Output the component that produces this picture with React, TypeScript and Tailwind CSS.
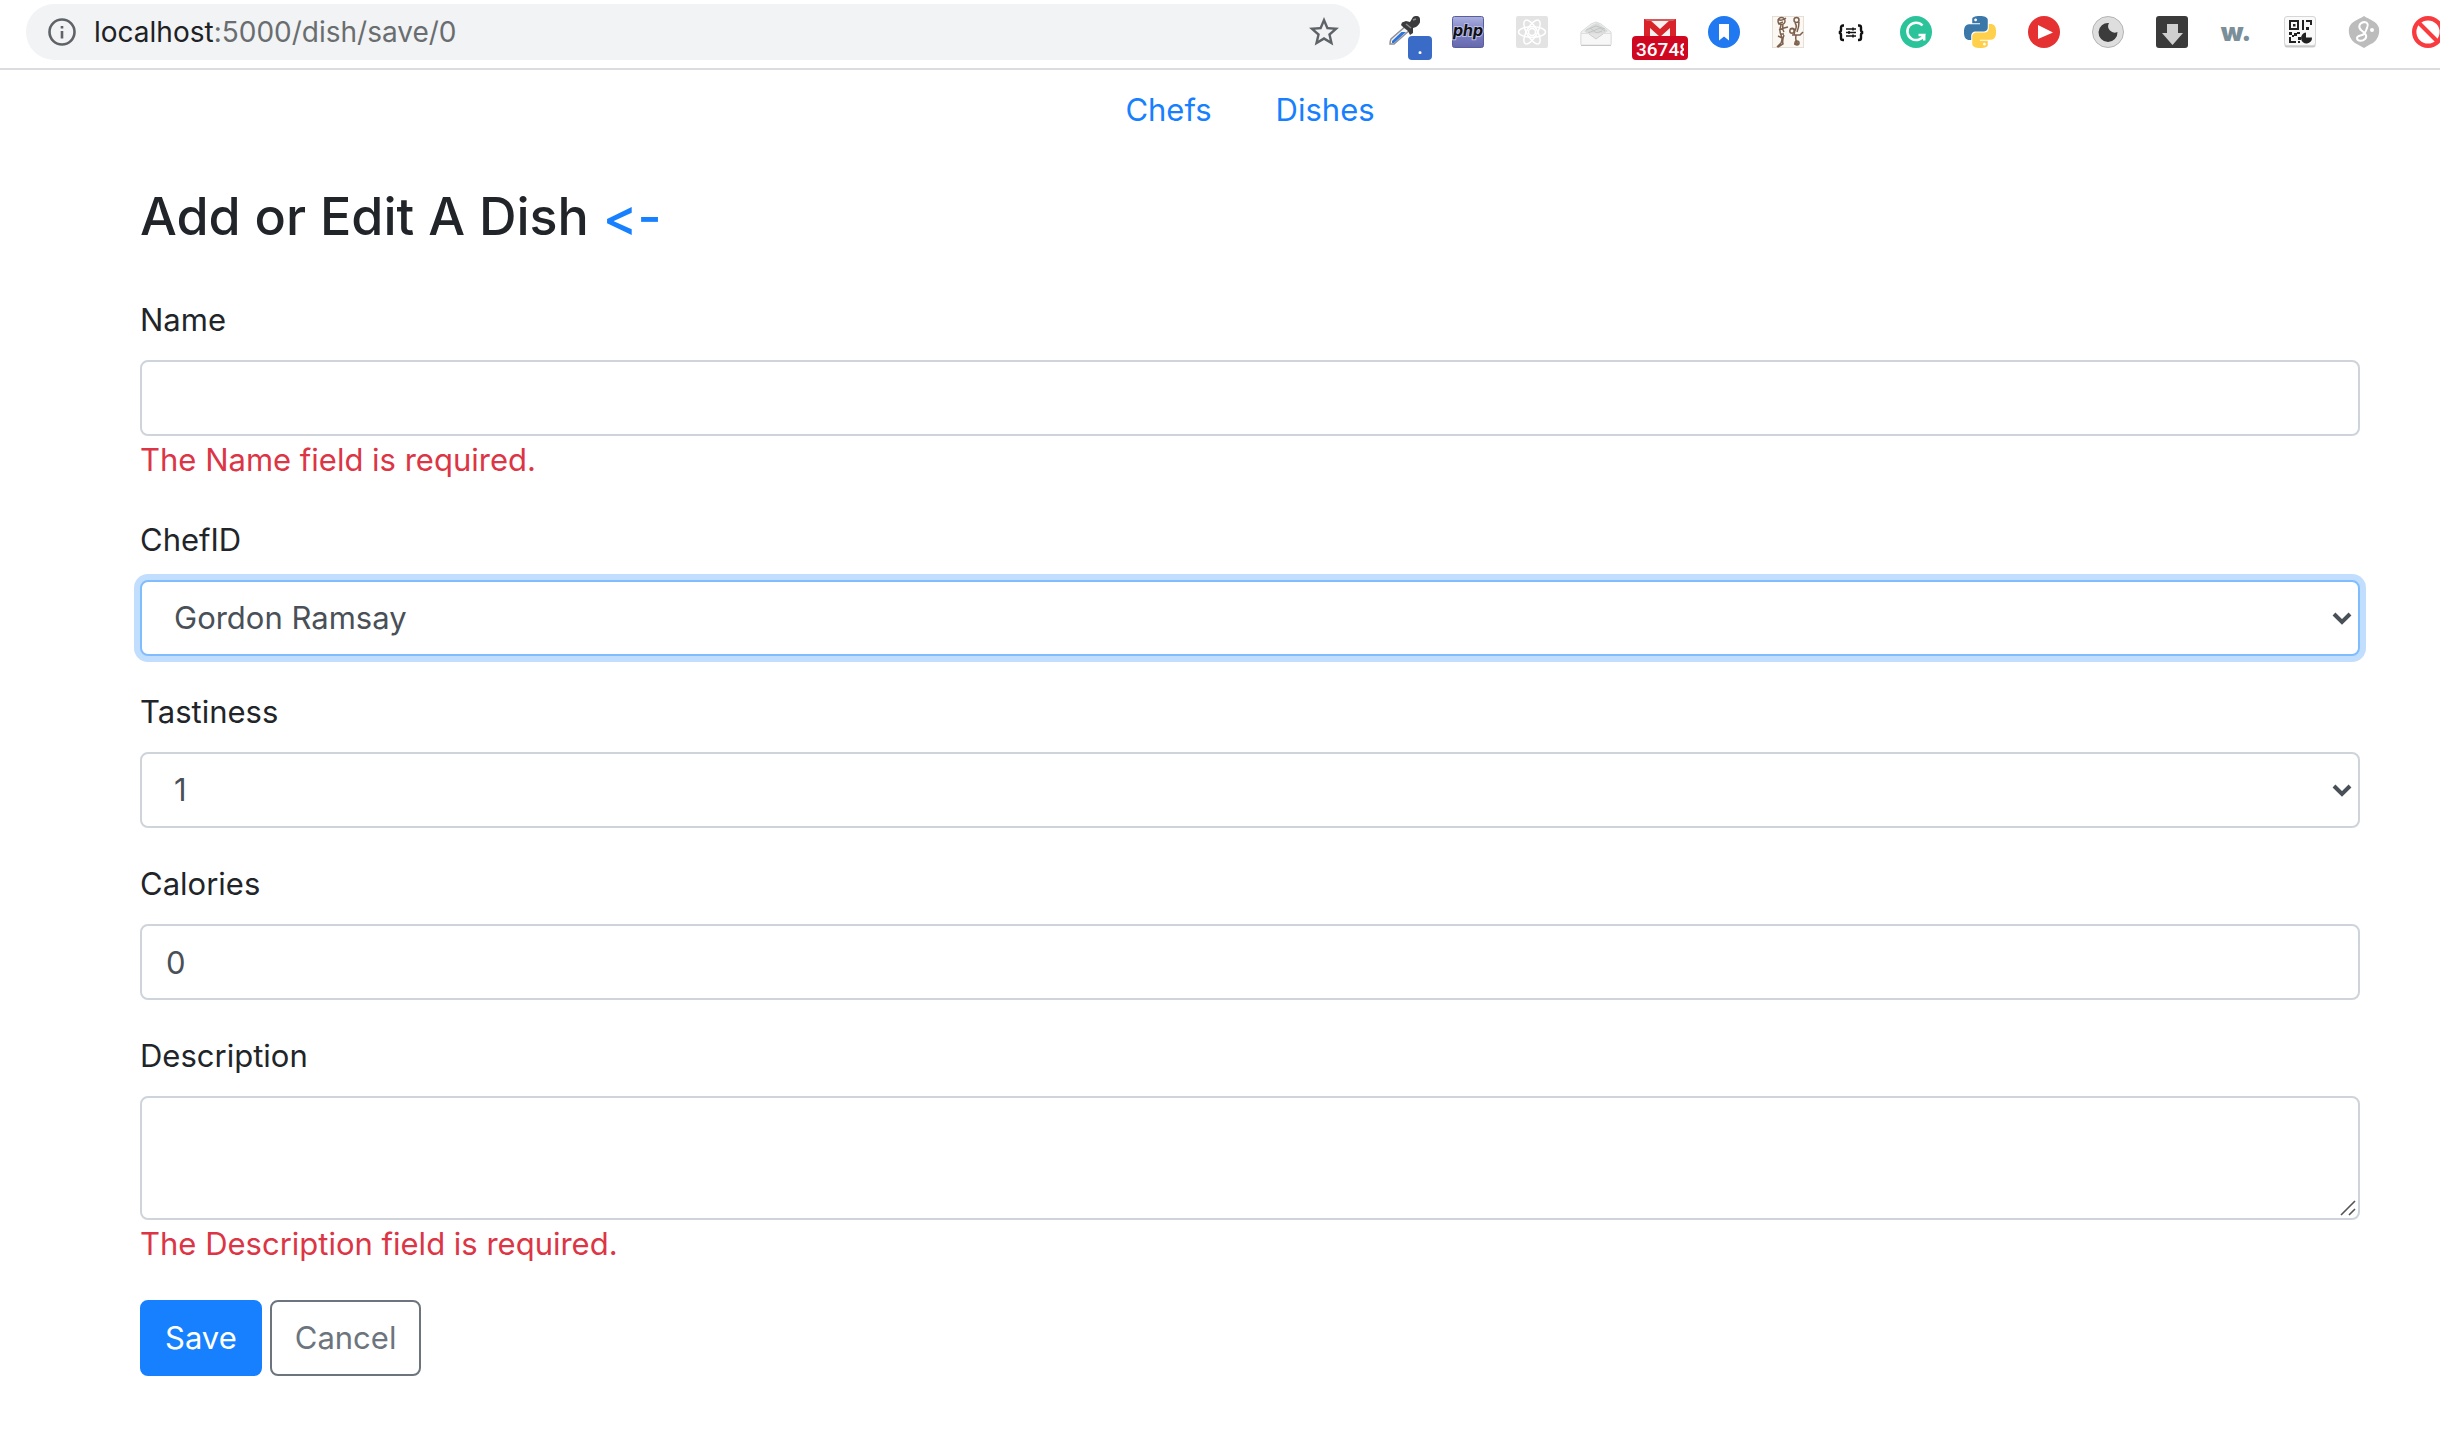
import { useState } from "react";
import type { ReactNode } from "react";

function Ext({ label, children }: { label: string; children: ReactNode }) {
  return (
    <button type="button" aria-label={label} className="relative h-8 w-8 shrink-0">
      {children}
    </button>
  );
}

function Svg({ children, box = "0 0 32 32" }: { children: ReactNode; box?: string }) {
  return (
    <svg viewBox={box} className="block h-8 w-8" aria-hidden="true">
      {children}
    </svg>
  );
}

function Extensions() {
  return (
    <div className="flex shrink-0 gap-8">
      <Ext label="Color picker">
        <Svg>
          <path d="M19 9 3 23c-1 2-1 3-1 5h4L23 13z" fill="#f4f5f7" stroke="#8d9096" strokeWidth="1.5" />
          <path d="M13.5 16 4 25v2h2L18 16z" fill="#2f74d8" />
          <path d="M14 6.5 18 5l4 1 3-5c3-2 7-1 7 2 1 3-1 6-4 8l-3 1v5l-3 2-2-4-5-4-2-2z" fill="#3b3b3d" />
          <path d="m25 4 3-1M18 8l5 4" stroke="#8b8b8b" strokeWidth="1.5" />
        </Svg>
        <span className="absolute top-5 left-5 flex h-6 w-6 items-center justify-center rounded-sm bg-[#3a6bc7] text-base leading-6 font-bold text-white">
          .
        </span>
      </Ext>
      <Ext label="PHP">
        <Svg>
          <defs>
            <linearGradient id="php" x1="0" y1="0" x2="0" y2="1">
              <stop offset="0" stopColor="#aab0e0" />
              <stop offset=".45" stopColor="#8085c4" />
              <stop offset="1" stopColor="#6568ae" />
            </linearGradient>
          </defs>
          <rect x=".5" y=".5" width="31" height="31" rx="2" fill="url(#php)" stroke="#5b5e99" />
          <text
            x="16"
            y="20"
            textAnchor="middle"
            fontFamily="Inter, sans-serif"
            fontSize="16"
            fontWeight="700"
            fontStyle="italic"
            fill="#111"
            stroke="#b9bde8"
            strokeWidth="2"
            paintOrder="stroke"
          >
            php
          </text>
        </Svg>
      </Ext>
      <Ext label="React tools">
        <Svg>
          <rect width="32" height="32" rx="2" fill="#e3e3e3" />
          <g fill="none" stroke="#fff" strokeWidth="1.5">
            <ellipse cx="16" cy="16" rx="13.5" ry="5.2" />
            <ellipse cx="16" cy="16" rx="13.5" ry="5.2" transform="rotate(60 16 16)" />
            <ellipse cx="16" cy="16" rx="13.5" ry="5.2" transform="rotate(120 16 16)" />
            <circle cx="16" cy="16" r="3.5" />
          </g>
        </Svg>
      </Ext>
      <Ext label="Mail checker">
        <Svg>
          <path d="M1 16 11 8l5-2 5 2 10 8v12H1z" fill="#f1f1f1" stroke="#dadada" />
          <path d="m4 15 8-6 5-2 5 3 6 5-6 4H9z" fill="#d9dada" />
          <path d="m6 14 10-4 9 3M8 17l12-5 5 3M11 19l11-4M10 12l9 7" stroke="#c3c5c5" fill="none" />
          <path d="M1 17.5h30V29H1z" fill="#f7f7f7" stroke="#dfdfdf" />
          <path d="m9 18 7 5 7-5" fill="#e4e4e4" stroke="#cfcfcf" />
          <path d="M1 29.5h30" stroke="#c6c6c6" />
        </Svg>
      </Ext>
      <Ext label="Gmail">
        <Svg>
          <path d="M0 3h32v24H0z" fill="#f5f1f1" />
          <path d="M0 3h5l11 10L27 3h5v24h-6V12l-10 9L6 12v15H0z" fill="#d9232a" />
          <path d="M0 3h32l-3 2H3z" fill="#d65a5a" />
        </Svg>
        <span className="absolute top-5 -left-3 h-6 w-14 rounded-sm bg-[#d00721] px-1">
          <span className="block overflow-hidden text-left font-[Roboto,sans-serif] text-[19px] leading-7 font-medium text-white">
            36748
          </span>
        </span>
      </Ext>
      <Ext label="Bookmarks">
        <Svg>
          <circle cx="16" cy="16" r="16" fill="#2079f0" />
          <path d="M11 8h10v16.500l-5-4-5 4z" fill="#fff" />
        </Svg>
      </Ext>
      <Ext label="Sketch figures">
        <Svg>
          <rect x=".5" y=".5" width="31" height="31" fill="#fbf8f4" stroke="#e6dfd7" />
          <g fill="none" stroke="#7d604d" strokeWidth="1.5">
            <circle cx="9.500" cy="5" r="3.500" />
            <path d="M6 3q3 3 8-1M6 8l5-2M9 9q-2 6 0 10M11 9q-1 4 1 7M7 14l5-2 4-1M8 18h4M9 19q2 4 0 8l-4 4M12 19q-2 5-1 9l-5 3M6 20l4 2" />
            <circle cx="24.500" cy="4" r="2.500" />
            <path d="M23 7q3 4-1 9M27 6q0 5-2 10M18 13q3-2 5 1l-1 5M20 19h8l3-3M24 19q-1 6 2 9M22 28h4" />
            <circle cx="20" cy="15" r="2.200" />
            <circle cx="25" cy="27" r="2" />
          </g>
        </Svg>
      </Ext>
      <Ext label="JSON viewer">
        <Svg>
          <g fill="none" stroke="#111" strokeWidth="2.400">
            <path d="M8 9.500H7q-2 0-2 2v2.500q0 2-2 2.500Q5 17 5 19v3q0 2 2 2h1M22 9.500h1q2 0 2 2v2.500q0 2 2 2.500-2 .5-2 2.500v3q0 2-2 2h-1" />
          </g>
          <path d="M10 13h10M10 16.500h10M10 20h10M17 11.500v3M13 15v3M17 18.500v3" stroke="#111" strokeWidth="1.500" />
        </Svg>
      </Ext>
      <Ext label="Grammar checker">
        <Svg>
          <circle cx="16" cy="16" r="16" fill="#2bc39a" />
          <path d="M22.500 9.500A8.700 8.700 0 1 0 24 19h-5.500M24.200 24.500V19" fill="none" stroke="#fff" strokeWidth="2.500" />
        </Svg>
      </Ext>
      <Ext label="Python">
        <Svg box="0 0 24 24">
          <path
            fill="#3b77a8"
            d="M14.25.18l.9.2.73.26.59.3.45.32.34.34.25.34.16.33.1.3.04.26.02.2-.01.13V8.5l-.05.63-.13.55-.21.46-.26.38-.3.31-.33.25-.35.19-.35.14-.33.1-.3.07-.26.04-.21.02H8.77l-.69.05-.59.14-.5.22-.41.27-.33.32-.27.35-.2.36-.15.37-.1.35-.07.32-.04.27-.02.21v3.06H3.17l-.21-.03-.28-.07-.32-.12-.35-.18-.36-.26-.36-.36-.35-.46-.32-.59-.28-.73-.21-.88-.14-1.05-.05-1.23.06-1.22.16-1.04.24-.87.32-.71.36-.57.4-.44.42-.33.42-.24.4-.16.36-.1.32-.05.24-.01h.16l.06.01h8.16v-.83H6.18l-.01-2.75-.02-.37.05-.34.11-.31.17-.28.25-.26.31-.23.38-.2.44-.18.51-.15.58-.12.64-.1.71-.06.77-.04.84-.02 1.27.05zm-6.3 1.98l-.23.33-.08.41.08.41.23.34.33.22.41.09.41-.09.33-.22.23-.34.08-.41-.08-.41-.23-.33-.33-.22-.41-.09-.41.09z"
          />
          <path
            fill="#ffd04c"
            d="M21.04 6.11l.28.06.32.12.35.18.36.27.36.35.35.47.32.59.28.73.21.88.14 1.04.05 1.23-.06 1.23-.16 1.04-.24.86-.32.71-.36.57-.4.45-.42.33-.42.24-.4.16-.36.09-.32.05-.24.02-.16-.01h-8.22v.82h5.84l.01 2.76.02.36-.05.34-.11.31-.17.29-.25.25-.31.24-.38.2-.44.17-.51.15-.58.13-.64.09-.71.07-.77.04-.84.01-1.27-.04-1.07-.14-.9-.2-.73-.25-.59-.3-.45-.33-.34-.34-.25-.34-.16-.33-.1-.3-.04-.25-.02-.2.01-.13v-5.34l.05-.64.13-.54.21-.46.26-.38.3-.32.33-.24.35-.2.35-.14.33-.1.3-.06.26-.04.21-.02.13-.01h5.84l.69-.05.59-.14.5-.21.41-.28.33-.32.27-.35.2-.36.15-.36.1-.35.07-.32.04-.28.02-.21V6.07h2.09l.14.01zm-6.47 14.25l-.23.33-.08.41.08.41.23.33.33.23.41.08.41-.08.33-.23.23-.33.08-.41-.08-.41-.23-.33-.33-.23-.41-.08-.41.08z"
          />
        </Svg>
      </Ext>
      <Ext label="Video player">
        <Svg>
          <circle cx="16" cy="16" r="16" fill="#e53131" />
          <path d="m10 9 15 7.500L10 23z" fill="#fff" />
        </Svg>
      </Ext>
      <Ext label="Dark mode">
        <Svg>
          <circle cx="16" cy="16" r="15.500" fill="#dedede" stroke="#b4b4b4" />
          <path d="M17 7a6.500 6.500 0 0 0 8.500 9A9.500 9.500 0 1 1 17 7z" fill="#3c3c3c" />
        </Svg>
      </Ext>
      <Ext label="Downloader">
        <Svg>
          <rect width="32" height="32" rx="3" fill="#3a3a3a" />
          <path d="M11 8h11v9h5L16.500 29 6 17h5z" fill="#cfcfcf" />
        </Svg>
      </Ext>
      <Ext label="Word tool">
        <span className="block text-center text-[26px] leading-7 font-black text-[#7a8f99]">w.</span>
      </Ext>
      <Ext label="QR code">
        <Svg>
          <rect x=".5" y="1" width="31" height="30.500" rx="2.500" fill="#c9c9c9" />
          <rect x=".5" y=".5" width="31" height="29" rx="2.500" fill="#fafafa" stroke="#d6d6d6" />
          <path d="M6 5h8v8H6z" fill="none" stroke="#222" strokeWidth="2" />
          <path d="M9 8h2.500v2.500H9zM18 4h2v10h-2zM22 4h6v5h-2V6h-4zM22 11h3v3h-3zM5 16h3v3H5zM10 17h3v3h-3zM13 16h3v2h-3zM8 19h2v2H8zM5 21h2v4h5v2H5zM14 21h3v3h-3zM14 25h2v2h-2z" fill="#222" />
          <path d="M22 16.500v5h6a5.500 5.500 0 1 1-6-5z" fill="#222" />
        </Svg>
      </Ext>
      <Ext label="Script manager">
        <Svg>
          <path d="M16 0c6 4 13 5 15 12 1 7-2 12-6 15-4 2-6 3-9 5-3-2-6-3-9-5-4-3-7-8-6-15C3 5 10 4 16 0z" fill="#bcbcbc" />
          <path d="M19 12c2-4 0-6-3-6-5 1-6 5-3 8 4 3 7 6 4 9-3 3-8 2-8-1 0-3 5-2 7-4s2-4 3-6z" fill="none" stroke="#fff" strokeWidth="2" />
          <circle cx="24" cy="14" r="2" fill="#fff" />
        </Svg>
      </Ext>
      <Ext label="Blocker">
        <Svg>
          <circle cx="16" cy="16" r="13.800" fill="none" stroke="#f93b3f" strokeWidth="4.400" />
          <path d="m7 7 18 18" stroke="#f93b3f" strokeWidth="4" />
        </Svg>
      </Ext>
    </div>
  );
}

function Field({ id, label, error, children }: { id: string; label: string; error?: string; children: ReactNode }) {
  return (
    <div className="mb-8">
      <label htmlFor={id} className="mb-4 block w-fit">
        {label}
      </label>
      {children}
      {error && <p className="text-[#dc3545]">{error}</p>}
    </div>
  );
}

const control = "block w-full rounded-lg border-2 border-[#ced4da] bg-white text-[#495057] outline-none";
const focus = "focus:border-[#80bdff] focus:ring-[6px] focus:ring-[#c2deff]";

function Select({ id, options, autoFocus }: { id: string; options: string[]; autoFocus?: boolean }) {
  return (
    <div className="relative">
      <select id={id} autoFocus={autoFocus} className={`${control} ${focus} h-[76px] appearance-none px-8`}>
        {options.map((o) => (
          <option key={o}>{o}</option>
        ))}
      </select>
      <svg viewBox="0 0 20 14" className="pointer-events-none absolute top-8 right-2 h-3.5 w-5" aria-hidden="true">
        <path d="m2 2 8 8 8-8" fill="none" stroke="#495057" strokeWidth="4" />
      </svg>
    </div>
  );
}

export default function App() {
  const [calories, setCalories] = useState("0");
  return (
    <div className="overflow-x-hidden bg-white font-[Inter,sans-serif] text-[31px] leading-[48px] text-[#212529]">
      <header className="flex h-[70px] items-start border-b-2 border-[#dadce0] pt-1 pl-[26px]">
        <div className="flex h-14 min-w-0 flex-1 items-center rounded-full bg-[#f1f3f4] pr-[18px] pl-[22px]">
          <button type="button" aria-label="Site information" className="mr-[18px]">
            <svg viewBox="0 0 28 28" className="block h-7 w-7" aria-hidden="true">
              <circle cx="14" cy="14" r="12.500" fill="none" stroke="#5f6368" strokeWidth="2.600" />
              <path d="M12.700 13h2.600v7.500h-2.600zM12.700 8h2.600v2.600h-2.600z" fill="#5f6368" />
            </svg>
          </button>
          <div className="flex-1 truncate text-[28px] text-[#6a6d70]">
            <span className="text-[#202124]">localhost</span>:5000/dish/save/0
          </div>
          <button type="button" aria-label="Bookmark this page">
            <svg viewBox="0 0 24 24" className="block h-9 w-9" fill="#5f6368" aria-hidden="true">
              <path d="M22 9.240l-7.190-.620L12 2 9.190 8.630 2 9.240l5.460 4.730L5.820 21 12 17.270 18.180 21l-1.630-7.030L22 9.240zM12 15.400l-3.760 2.270 1-4.280-3.320-2.880 4.380-.380L12 6.100l1.710 4.040 4.380.380-3.320 2.880 1 4.280L12 15.400z" />
            </svg>
          </button>
        </div>
        <div className="-mr-1 shrink-0 pt-3 pl-7">
          <Extensions />
        </div>
      </header>

      <div className="pr-20 pl-[140px]">
        <nav className="flex justify-center gap-16 pt-4 text-[#1680ff]">
          <a href="#chefs">Chefs</a>
          <a href="#dishes">Dishes</a>
        </nav>

        <main>
          <h1 className="mt-[50px] mb-[46px] text-[52px] leading-[66px] font-medium [font-feature-settings:'calt'_0]">
            Add or Edit A Dish{" "}
            <a href="#dishes" className="text-[#1680ff]">
              &lt;-
            </a>
          </h1>

          <form noValidate onSubmit={(e) => e.preventDefault()}>
            <Field id="name" label="Name" error="The Name field is required.">
              <input id="name" type="text" className={`${control} ${focus} h-[76px] px-6`} />
            </Field>
            <Field id="chef" label="ChefID">
              <Select id="chef" autoFocus options={["Gordon Ramsay"]} />
            </Field>
            <Field id="tastiness" label="Tastiness">
              <Select id="tastiness" options={["1", "2", "3", "4", "5"]} />
            </Field>
            <Field id="calories" label="Calories">
              <input
                id="calories"
                type="text"
                inputMode="numeric"
                value={calories}
                onChange={(e) => setCalories(e.target.value)}
                className={`${control} ${focus} h-[76px] px-6`}
              />
            </Field>
            <Field id="description" label="Description" error="The Description field is required.">
              <div className="relative">
                <textarea id="description" className={`${control} ${focus} h-[124px] resize-none px-6 py-3`} />
                <svg viewBox="0 0 16 16" className="pointer-events-none absolute right-1 bottom-1 h-4 w-4" aria-hidden="true">
                  <path d="M1 15 15 1M9 15l6-6" stroke="#555" strokeWidth="1.600" />
                </svg>
              </div>
            </Field>
            <div className="flex gap-2">
              <button type="submit" className="h-[76px] rounded-lg border-2 border-[#1680ff] bg-[#1680ff] px-[23px] text-white">
                Save
              </button>
              <button type="button" className="h-[76px] rounded-lg border-2 border-[#6c757d] px-[23px] text-[#6c757d]">
                Cancel
              </button>
            </div>
          </form>
        </main>
      </div>
    </div>
  );
}
